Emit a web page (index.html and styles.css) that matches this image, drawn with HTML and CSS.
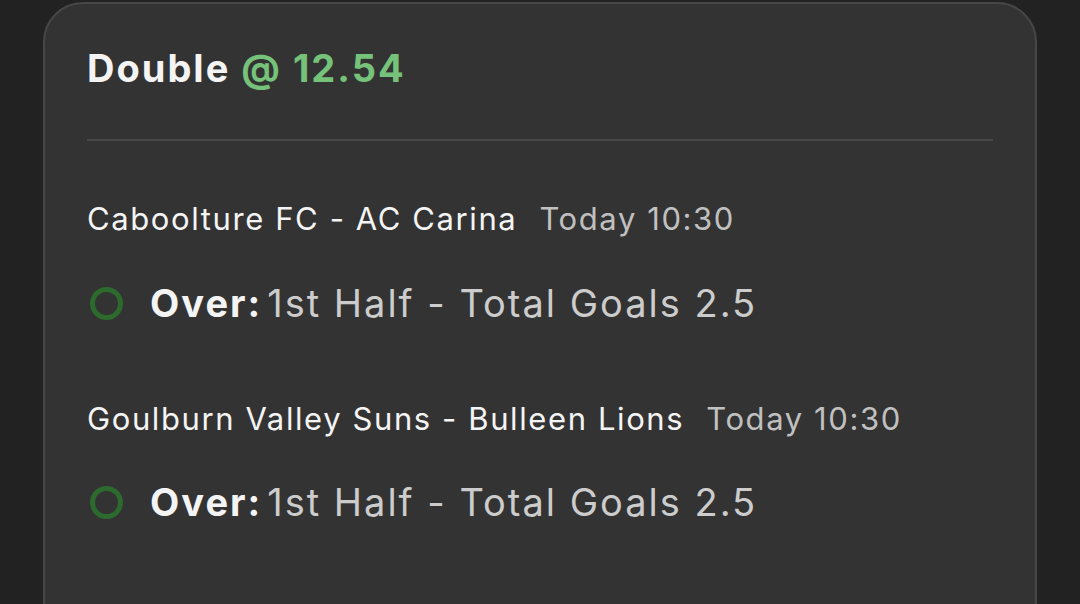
FILE: index.html
```html
<!DOCTYPE html>
<html>
<head>
<meta charset="utf-8">
<link rel="stylesheet" href="styles.css">
</head>
<body>
<div class="card">
  <div class="title">Double <span class="odds">@ 12.54</span></div>
  <div class="divider"></div>
  <div class="leg">
    <div class="match"><span class="teams">Caboolture FC - AC Carina</span><span class="time">Today 10:30</span></div>
    <div class="pick"><span class="ring"></span><span class="label">Over:</span><span class="market">1st Half - Total Goals 2.5</span></div>
  </div>
  <div class="leg">
    <div class="match"><span class="teams">Goulburn Valley Suns - Bulleen Lions</span><span class="time">Today 10:30</span></div>
    <div class="pick"><span class="ring"></span><span class="label">Over:</span><span class="market">1st Half - Total Goals 2.5</span></div>
  </div>
</div>
</body>
</html>
```
FILE: styles.css
```css
html, body {
  margin: 0;
  padding: 0;
  background: #222222;
  height: 100%;
  overflow: hidden;
}
body {
  font-family: Inter, "Noto Sans", sans-serif;
  padding: 2px 0 0 43px;
}
.card {
  width: 994px;
  height: 700px;
  background: #333333;
  border: 2px solid #474747;
  border-radius: 40px;
  padding: 41px 42px 0 42px;
  box-sizing: border-box;
}
.title {
  font-size: 38px;
  line-height: 46px;
  font-weight: 700;
  letter-spacing: 2px;
  color: #f4f4f4;
}
.odds {
  color: #76c27a;
}
.divider {
  height: 2px;
  background: #474747;
  margin-top: 48px;
  width: 906px;
}
.leg {
  display: flex;
  flex-direction: column;
}
.match {
  margin-top: 58px;
  display: flex;
  align-items: baseline;
  gap: 22px;
  font-size: 31px;
  line-height: 40px;
  letter-spacing: 1.6px;
}
.leg + .leg .match {
  margin-top: 73px;
}
.teams {
  color: #f4f4f4;
}
.time {
  color: #c0c0c0;
}
.pick {
  margin-top: 41px;
  display: flex;
  align-items: center;
  font-size: 38px;
  line-height: 46px;
  letter-spacing: 2px;
}
.leg + .leg .pick {
  margin-top: 40px;
}
.ring {
  width: 33px;
  height: 33px;
  box-sizing: border-box;
  border: 5px solid #2c6a2d;
  border-radius: 50%;
  margin-left: 3px;
  margin-right: 27px;
  flex: none;
}
.label {
  font-weight: 700;
  color: #f4f4f4;
  margin-right: 5px;
}
.market {
  color: #cccccc;
}
```
